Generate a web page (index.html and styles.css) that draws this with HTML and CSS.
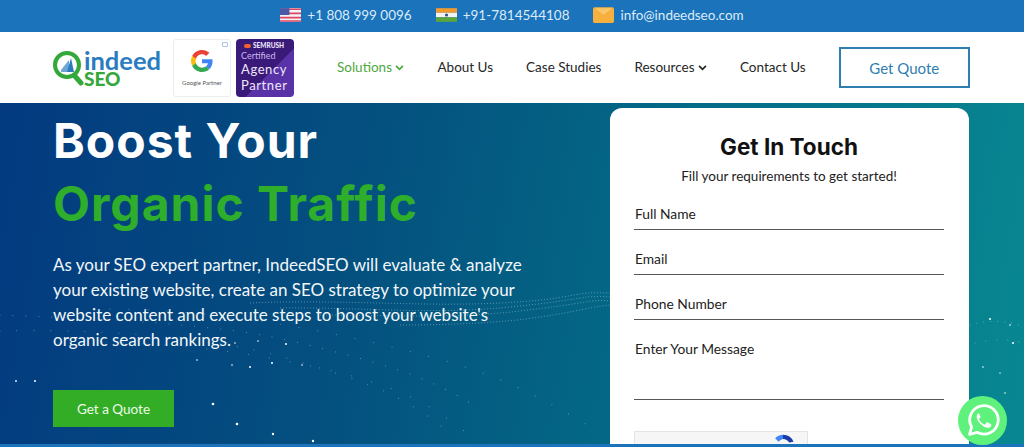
FILE: index.html
```html
<!DOCTYPE html>
<html lang="en">
<head>
    <meta charset="UTF-8">
    <meta name="viewport" content="width=device-width, initial-scale=1.0">
    <title>IndeedSEO</title>
    <link rel="stylesheet" href="styles.css">
</head>
<body>
    <div class="topbar">
        <div class="topbar-item">
            <svg class="flag" viewBox="0 0 20 13"><rect width="20" height="13" fill="#f4f2f4"/><path d="M0 1h20M0 5h20M0 9h20M0 12.2h20" stroke="#e0455f" stroke-width="1.6"/><rect width="9" height="6.5" fill="#4a5aa8"/></svg>
            <span>+1 808 999 0096</span>
        </div>
        <div class="topbar-item">
            <svg class="flag" viewBox="0 0 20 13"><rect width="20" height="4.4" fill="#f39a2e"/><rect y="4.4" width="20" height="4.3" fill="#f2f2f2"/><rect y="8.7" width="20" height="4.3" fill="#5aa63a"/><circle cx="10" cy="6.5" r="1.5" fill="#2f4f8f"/></svg>
            <span>+91-7814544108</span>
        </div>
        <div class="topbar-item">
            <svg class="flag mail" viewBox="0 0 20 15"><rect width="20" height="15" rx="1.5" fill="#f7b03e"/><path d="M1 1l9 7 9-7" fill="#fbc667" stroke="#eda231" stroke-width=".6"/></svg>
            <span>info@indeedseo.com</span>
        </div>
    </div>

    <header class="navbar">
        <div class="brand">
            <svg class="logo-mark" viewBox="0 0 31 36">
                <path d="M20 23l8 9" stroke="#35a83c" stroke-width="5" stroke-linecap="round"/>
                <circle cx="14" cy="14" r="12" fill="#fff" stroke="#35a83c" stroke-width="4"/>
                <path d="M8 19l8-10v12H8z" fill="#6fa4d6"/>
                <path d="M14 21l4-14 3 14z" fill="#2f79bd"/>
            </svg>
            <div class="logo-text">
                <span class="logo-indeed">indeed</span>
                <span class="logo-seo">SEO</span>
            </div>
        </div>
        <div class="badge-google">
            <svg class="g-icon" viewBox="0 0 48 48">
                <path fill="#ea4335" d="M24 9.500c3.500 0 6.700 1.200 9.200 3.600l6.900-6.900C35.900 2.400 30.500 0 24 0 14.600 0 6.500 5.400 2.600 13.200l8 6.200C12.400 13.700 17.700 9.500 24 9.500z"/>
                <path fill="#4285f4" d="M47 24.500c0-1.600-.1-3.100-.4-4.500H24v9h12.900c-.6 3-2.200 5.500-4.700 7.200l7.700 6C44.400 38 47 31.800 47 24.500z"/>
                <path fill="#fbbc05" d="M10.600 28.600c-.5-1.400-.8-3-.8-4.600s.3-3.200.8-4.600l-8-6.200C.9 16.500 0 20.100 0 24s.9 7.500 2.600 10.800l8-6.200z"/>
                <path fill="#34a853" d="M24 48c6.500 0 11.900-2.100 15.900-5.800l-7.700-6c-2.100 1.400-4.900 2.300-8.200 2.300-6.300 0-11.600-4.200-13.400-9.900l-8 6.200C6.500 42.600 14.600 48 24 48z"/>
            </svg>
            <span>Google Partner</span>
            <i class="g-info"></i>
        </div>
        <div class="badge-semrush">
            <div class="semrush-name"><i></i>SEMRUSH</div>
            <div class="semrush-cert">Certified</div>
            <div class="semrush-big">Agency<br>Partner</div>
        </div>
        <nav class="nav-links">
            <a class="active" href="#">Solutions <svg class="chev" viewBox="0 0 10 7"><path d="M1 1l4 4 4-4" fill="none" stroke="currentColor" stroke-width="2"/></svg></a>
            <a href="#">About Us</a>
            <a href="#">Case Studies</a>
            <a href="#">Resources <svg class="chev" viewBox="0 0 10 7"><path d="M1 1l4 4 4-4" fill="none" stroke="currentColor" stroke-width="2"/></svg></a>
            <a href="#">Contact Us</a>
        </nav>
        <a class="quote-btn" href="#">Get Quote</a>
    </header>

    <section class="hero">
        <svg class="dots" viewBox="0 0 1024 343" aria-hidden="true">
            <g fill="none" stroke="#d5eaf2" stroke-dasharray="1 2" stroke-opacity=".4">
                <path d="M250 200C340 196 420 204 500 200S570 188 610 190"/>
                <path d="M280 205C360 204 430 212 510 204S580 192 610 194"/>
                <path d="M320 212C390 212 450 216 520 208S590 196 610 198"/>
                <path d="M400 222C450 222 500 220 540 214S590 204 610 202"/>
            </g>
            <g fill="none" stroke="#d5eaf2" stroke-linecap="round" stroke-opacity=".5">
                <path d="M0 212C100 216 220 220 300 240S420 270 470 300" stroke-dasharray="0 13"/>
                <path d="M0 228C90 226 210 232 290 256S400 290 450 330" stroke-dasharray="0 17"/>
                <path d="M60 240C160 236 260 250 340 270S440 310 480 340" stroke-dasharray="0 21"/>
                <path d="M110 206C210 206 320 226 400 246S520 280 600 330" stroke-dasharray="0 19"/>
                <path d="M970 222C990 216 1010 218 1024 224" stroke-dasharray="0 7"/>
                <path d="M975 240C990 236 1010 236 1024 240" stroke-dasharray="0 11"/>
            </g>
            <g fill="#fff">
                <circle cx="16" cy="278" r=".9"/><circle cx="35" cy="278" r="1"/>
                <circle cx="197" cy="257" r=".8"/><circle cx="232" cy="262" r=".8"/><circle cx="250" cy="264" r="1"/><circle cx="272" cy="260" r="1"/>
                <circle cx="213" cy="301" r="1.300"/><circle cx="237" cy="321" r="1.300"/><circle cx="273" cy="331" r="1.200"/><circle cx="313" cy="338" r="1.200"/>
                <circle cx="286" cy="241" r="1"/><circle cx="258" cy="238" r=".8"/><circle cx="235" cy="240" r=".8"/><circle cx="302" cy="262" r=".8"/>
                <circle cx="990" cy="216" r="1"/><circle cx="1010" cy="222" r=".8"/><circle cx="1013" cy="240" r="1"/><circle cx="983" cy="264" r=".8"/>
                <circle cx="1000" cy="270" r=".7"/><circle cx="1005" cy="290" r=".8"/>
            </g>
        </svg>
        <div class="hero-left">
            <h1>Boost Your <span>Organic Traffic</span></h1>
            <p>As your SEO expert partner, IndeedSEO will evaluate &amp; analyze your existing website, create an SEO strategy to optimize your website content and execute steps to boost your website's organic search rankings.</p>
            <a class="cta" href="#">Get a Quote</a>
        </div>
        <div class="form-card">
            <h2>Get In Touch</h2>
            <p class="form-sub">Fill your requirements to get started!</p>
            <div class="field">Full Name</div>
            <div class="field">Email</div>
            <div class="field">Phone Number</div>
            <div class="field field-message">Enter Your Message</div>
            <div class="captcha">
                <svg viewBox="0 0 32 32"><path d="M16 3a13 13 0 0 1 12 8l-5 1a8 8 0 0 0-7-4z" fill="#1c3aa9"/><path d="M16 3a13 13 0 0 0-9 4l4 4a8 8 0 0 1 5-3z" fill="#4285f4"/></svg>
            </div>
        </div>
    </section>
    <div class="bottom-strip"></div>

    <a class="whatsapp" href="#">
        <svg viewBox="0 0 48 48">
            <path d="M7 41l2.600-9.500A18 18 0 1 1 16.500 38.300z" fill="none" stroke="#fff" stroke-width="3.500" stroke-linejoin="round"/>
            <path d="M18.500 14.500c-.8 0-2.500 1.300-2.500 4 0 5 7.500 14 14.500 14 2.800 0 4-2 4-3.200 0-.8-.2-1.100-.7-1.400l-4-2c-.6-.3-1-.2-1.400.3l-1.500 1.900c-.4.400-.8.400-1.300.2-2.700-1.200-5-3.400-6.500-6-.2-.5-.2-.8.200-1.200l1.300-1.600c.3-.4.300-.8.100-1.200l-1.700-3.900c-.3-.7-.9-.9-1.500-.9z" fill="#fff"/>
        </svg>
    </a>
</body>
</html>
```

FILE: styles.css
```css
* {
    box-sizing: border-box;
    margin: 0;
    padding: 0;
}

html, body {
    height: 447px;
    overflow: hidden;
}

body {
    font-family: 'Lato', 'Noto Sans', sans-serif;
    background: #fff;
    position: relative;
}

a {
    text-decoration: none;
    color: inherit;
}

.topbar {
    height: 32px;
    background: #1a73bb;
    color: #dcebf7;
    font-size: 13.500px;
    display: flex;
    justify-content: center;
    align-items: center;
    gap: 24px;
    padding-bottom: 2px;
}

.topbar-item {
    display: flex;
    align-items: center;
    gap: 6px;
}

.flag {
    width: 21px;
    height: 14px;
}

.flag.mail {
    height: 16px;
}

.navbar {
    height: 71px;
    display: flex;
    align-items: center;
    padding-left: 53px;
    background: #fff;
}

.brand {
    width: 120px;
    display: flex;
    align-items: center;
    flex-shrink: 0;
}

.logo-mark {
    width: 31px;
    height: 36px;
    margin-top: 2px;
}

.logo-text {
    display: flex;
    flex-direction: column;
    font-weight: 700;
}

.logo-indeed {
    color: #2a7cc0;
    font-size: 25.500px;
    line-height: 21px;
}

.logo-seo {
    color: #35a83c;
    font-size: 19px;
    line-height: 15px;
    font-weight: 900;
}

.badge-google {
    width: 58px;
    height: 58px;
    margin-top: 1px;
    border: 1px solid #eceded;
    border-radius: 3px;
    display: flex;
    flex-direction: column;
    align-items: center;
    padding-top: 10px;
    color: #555;
    font-size: 6px;
    gap: 7px;
    position: relative;
}

.g-icon {
    width: 22px;
    height: 22px;
}

.g-info {
    position: absolute;
    right: 2px;
    top: 2px;
    width: 6px;
    height: 5px;
    border: 1px solid #a9c3de;
    border-radius: 1px;
}

.badge-semrush {
    width: 58px;
    height: 58px;
    margin: 1px 0 0 5px;
    border-radius: 4px;
    background: linear-gradient(135deg, #3a1a78 58%, #5a32a8 58%);
    color: #eee6fa;
    padding: 3px 0 0 5px;
    flex-shrink: 0;
}

.semrush-name {
    font-size: 6.500px;
    font-weight: 900;
    display: flex;
    align-items: center;
    gap: 2px;
    margin-left: 3px;
}

.semrush-name i {
    width: 7px;
    height: 4px;
    background: #f0622a;
    border-radius: 2px;
}

.semrush-cert {
    font-size: 9px;
    line-height: 11px;
    margin: 1px 0 0;
    color: #cbb8ee;
}

.semrush-big {
    font-size: 13px;
    line-height: 16px;
    letter-spacing: .6px;
}

.nav-links {
    display: flex;
    align-items: center;
    gap: 33px;
    margin-left: 43px;
    padding-bottom: 2px;
    color: #262626;
    font-size: 13.500px;
    white-space: nowrap;
}

.nav-links .active {
    color: #4ea83f;
}

.chev {
    width: 9px;
    height: 6px;
    vertical-align: 1px;
}

.quote-btn {
    width: 131px;
    height: 41px;
    margin-left: 33px;
    border: 2px solid #2e7fb0;
    color: #2e7fb0;
    font-size: 15px;
    display: flex;
    justify-content: center;
    align-items: center;
}

.hero {
    height: 341px;
    padding: 5px 55px 0 53px;
    display: flex;
    justify-content: space-between;
    position: relative;
    overflow: hidden;
    background: linear-gradient(100deg, #033a80 0%, #04507f 35%, #046785 60%, #088892 100%);
}

.dots {
    position: absolute;
    left: 0;
    top: 0;
    width: 1024px;
    height: 343px;
}

.hero-left {
    width: 480px;
    position: relative;
}

.hero-left h1 {
    font-family: 'Inter', sans-serif;
    font-size: 48px;
    font-weight: 700;
    line-height: 63px;
    letter-spacing: 1px;
    color: #fff;
    white-space: nowrap;
    padding-top: 1px;
}

.hero-left h1 span {
    display: block;
    color: #2fae2b;
}

.hero-left p {
    margin-top: 17px;
    color: #f2f7fa;
    font-size: 17px;
    line-height: 25px;
}

.cta {
    display: flex;
    width: 121px;
    height: 37px;
    margin-top: 38px;
    background: #33ad26;
    color: #eefbe9;
    font-size: 13.500px;
    justify-content: center;
    align-items: center;
}

.form-card {
    width: 359px;
    height: 345px;
    padding: 24px 25px 0 24px;
    background: #fff;
    border-radius: 12px 12px 0 0;
    position: relative;
    color: #222;
    font-size: 13.800px;
}

.form-card h2 {
    font-family: 'Inter', sans-serif;
    font-size: 22.500px;
    line-height: 29px;
    font-weight: 700;
    color: #111;
    text-align: center;
}

.form-sub {
    margin-top: 6px;
    text-align: center;
    font-size: 13.500px;
    line-height: 18px;
}

.field {
    height: 45px;
    padding: 20px 0 0 1px;
    line-height: 18px;
    border-bottom: 1px solid #555;
}

.field-message {
    height: 80px;
}

.captcha {
    width: 174px;
    height: 40px;
    margin-top: 31px;
    background: #f6f6f6;
    border: 1px solid #e4e4e4;
    position: relative;
}

.captcha svg {
    position: absolute;
    right: 10px;
    top: 0;
    width: 28px;
    height: 28px;
}

.bottom-strip {
    position: absolute;
    left: 0;
    right: 0;
    bottom: 0;
    height: 3px;
    background: #1a73bb;
}

.whatsapp {
    position: absolute;
    left: 958px;
    top: 396px;
    width: 49px;
    height: 49px;
    border-radius: 50%;
    background: #5ef27c;
    display: flex;
    justify-content: center;
    align-items: center;
}

.whatsapp svg {
    width: 38px;
    height: 38px;
}
```
